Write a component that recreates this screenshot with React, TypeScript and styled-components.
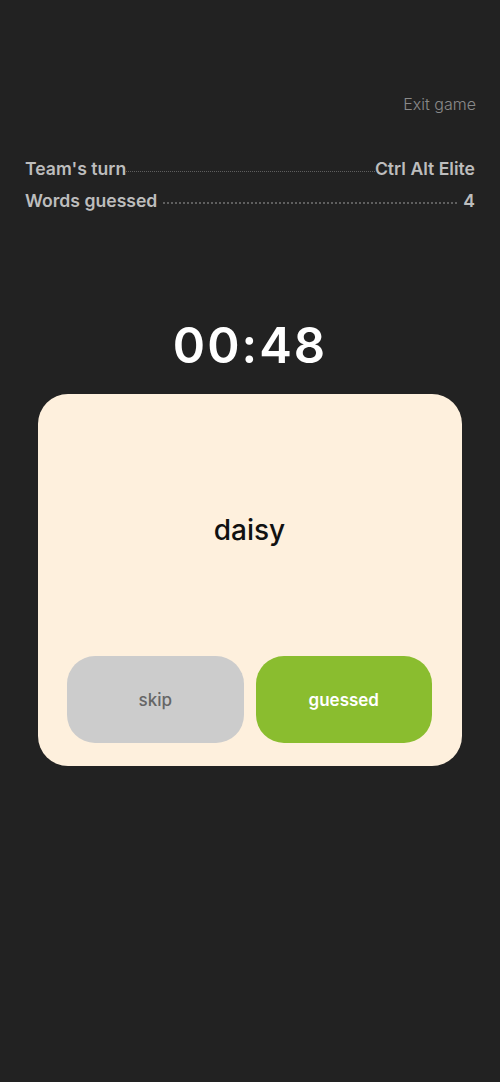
import React from "react";
import styled, { createGlobalStyle } from "styled-components";

const GlobalStyle = createGlobalStyle`
  html, body {
    margin: 0;
    padding: 0;
    background: #222222;
  }
  body {
    font-family: Inter, "Noto Sans", sans-serif;
  }
`;

const Page = styled.div`
  min-height: 1082px;
  background: #222222;
  padding: 94px 25px 0 25px;
  box-sizing: border-box;
  display: flex;
  flex-direction: column;
`;

const TopBar = styled.div`
  display: flex;
  justify-content: flex-end;
`;

const ExitLink = styled.button`
  background: none;
  border: none;
  padding: 0;
  margin-right: -1px;
  font-family: Inter, sans-serif;
  font-size: 16px;
  font-weight: 300;
  color: #8a8a8a;
  cursor: pointer;
`;

const Stats = styled.div`
  margin-top: 45px;
  display: flex;
  flex-direction: column;
  gap: 12px;
`;

const StatRow = styled.div`
  display: flex;
  align-items: baseline;
  font-size: 17.6px;
  font-weight: 600;
  color: #bdbdbd;
  line-height: 20px;
`;

const Leader = styled.span<{ $wavy?: boolean }>`
  flex: 1;
  margin: 0 ${(p) => (p.$wavy ? "0" : "6px")};
  border-bottom: ${(p) => (p.$wavy ? "1.5px" : "2px")} dotted #5f5f5f;
  transform: translateY(-3px);
`;

const Timer = styled.div`
  margin-top: 107px;
  text-align: center;
  font-size: 49px;
  font-weight: 600;
  letter-spacing: 2px;
  color: #ffffff;
  line-height: 56px;
`;

const Card = styled.div`
  margin: 20px 13px 0 13px;
  background: #fef0dd;
  border-radius: 30px;
  height: 372px;
  box-sizing: border-box;
  padding: 0 30px 23px 29px;
  display: flex;
  flex-direction: column;
`;

const Word = styled.div`
  flex: 1;
  display: flex;
  align-items: center;
  justify-content: center;
  font-size: 28px;
  font-weight: 500;
  color: #111111;
  padding-top: 10px;
`;

const Actions = styled.div`
  display: grid;
  grid-template-columns: 1fr 1fr;
  gap: 12px;
`;

const ActionButton = styled.button<{ $variant: "skip" | "guessed" }>`
  height: 87px;
  border: none;
  border-radius: 28px;
  font-family: Inter, sans-serif;
  font-size: 17px;
  font-weight: ${(p) => (p.$variant === "guessed" ? 600 : 500)};
  background: ${(p) => (p.$variant === "guessed" ? "#8abd2f" : "#cccccc")};
  color: ${(p) => (p.$variant === "guessed" ? "#ffffff" : "#666666")};
  cursor: pointer;
`;

export default function App() {
  return (
    <>
      <GlobalStyle />
      <Page>
        <TopBar>
          <ExitLink>Exit game</ExitLink>
        </TopBar>
        <Stats>
          <StatRow>
            <span>Team's turn</span>
            <Leader $wavy />
            <span>Ctrl Alt Elite</span>
          </StatRow>
          <StatRow>
            <span>Words guessed</span>
            <Leader />
            <span>4</span>
          </StatRow>
        </Stats>
        <Timer>00:48</Timer>
        <Card>
          <Word>daisy</Word>
          <Actions>
            <ActionButton $variant="skip">skip</ActionButton>
            <ActionButton $variant="guessed">guessed</ActionButton>
          </Actions>
        </Card>
      </Page>
    </>
  );
}
